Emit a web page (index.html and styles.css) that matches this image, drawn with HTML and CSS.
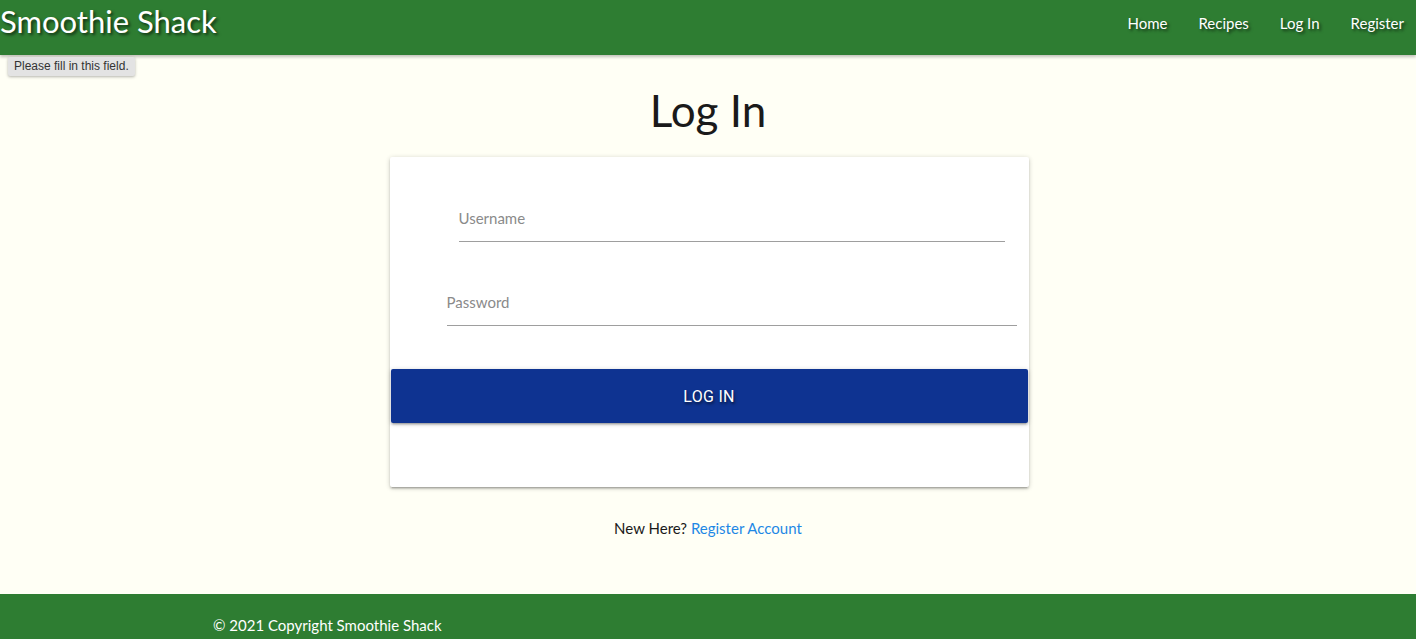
FILE: index.html
```html
<!DOCTYPE html>
<html lang="en">
<head>
<meta charset="utf-8">
<title>Log In - Smoothie Shack</title>
<link rel="stylesheet" href="styles.css">
</head>
<body>
<header class="navbar">
  <a class="brand" href="#">Smoothie Shack</a>
  <nav class="nav-links">
    <a href="#">Home</a>
    <a href="#">Recipes</a>
    <a href="#">Log In</a>
    <a href="#">Register</a>
  </nav>
</header>
<div class="tooltip">Please fill in this field.</div>
<main class="main">
  <h1 class="title">Log In</h1>
  <form class="card">
    <div class="field field-user">
      <input type="text" placeholder="Username">
    </div>
    <div class="field field-pass">
      <input type="password" placeholder="Password">
    </div>
    <button type="button" class="btn">LOG IN</button>
  </form>
  <p class="register">New Here? <a href="#">Register Account</a></p>
</main>
<footer class="footer">
  <p class="copy">© 2021 Copyright Smoothie Shack</p>
</footer>
</body>
</html>
```

FILE: styles.css
```css
* { box-sizing: border-box; }
html, body { margin: 0; padding: 0; }
body {
  font-family: Lato, "Open Sans", sans-serif;
  background: #fffff5;
  color: #1a1a1a;
  min-height: 639px;
  display: flex;
  flex-direction: column;
  overflow: hidden;
}
.navbar {
  height: 55px;
  background: #2e7d32;
  display: flex;
  align-items: center;
  justify-content: space-between;
  box-shadow: 0 2px 3px rgba(0,0,0,0.25);
  position: relative;
  z-index: 1;
}
.brand {
  color: #fff;
  text-decoration: none;
  font-size: 31px;
  line-height: 55px;
  margin-top: -12px;
  text-shadow: 2px 2px 3px rgba(0,0,0,0.6);
}
.nav-links {
  display: flex;
  margin-top: -9px;
}
.nav-links a {
  color: #fff;
  text-decoration: none;
  font-size: 15px;
  padding: 0 15.5px;
  text-shadow: 2px 2px 3px rgba(0,0,0,0.6);
}
.nav-links a:last-child { padding-right: 12px; }
.tooltip {
  position: absolute;
  left: 8px;
  top: 57px;
  height: 19px;
  padding: 0 6px;
  background: #e3e3e3;
  color: #333;
  font-family: "Liberation Sans", Arial, sans-serif;
  font-size: 12px;
  line-height: 19px;
  border-radius: 2px;
  box-shadow: 0 1px 3px rgba(0,0,0,0.3);
  z-index: 2;
}
.main {
  flex: 1;
  display: flex;
  flex-direction: column;
  align-items: center;
}
.title {
  font-weight: 400;
  font-size: 44px;
  margin: 27px 0 0;
  line-height: 56px;
}
.card {
  margin: 19px 0 0 2px;
  width: 639px;
  height: 330px;
  background: #fff;
  border-radius: 2px;
  box-shadow: 0 2px 2px rgba(0,0,0,0.14), 0 3px 1px -2px rgba(0,0,0,0.12), 0 1px 5px rgba(0,0,0,0.2);
  display: flex;
  flex-direction: column;
  padding-top: 37px;
}
.field input {
  width: 100%;
  height: 48px;
  border: none;
  border-bottom: 1px solid #9e9e9e;
  background: transparent;
  font-family: Lato, sans-serif;
  font-size: 15px;
  padding: 0;
  outline: none;
}
.field input::placeholder { color: #8a8a8a; }
.field-user { margin: 0 24px 0 69px; }
.field-pass { margin: 36px 12px 0 57px; }
.btn {
  margin: 43px 1px 0;
  height: 54px;
  background: #0e3391;
  color: #fff;
  border: none;
  border-radius: 2px;
  font-family: Roboto, sans-serif;
  font-size: 16px;
  letter-spacing: 0.3px;
  padding-top: 2px;
  text-shadow: 1px 2px 3px rgba(0,0,0,0.6);
  box-shadow: 0 2px 2px rgba(0,0,0,0.14), 0 3px 1px -2px rgba(0,0,0,0.12), 0 1px 5px rgba(0,0,0,0.2);
}
.register {
  margin: 31px 0 0;
  font-size: 15px;
  line-height: 20px;
}
.register a { color: #1e88e5; text-decoration: none; }
.footer {
  height: 45px;
  background: #2e7d32;
  margin-top: auto;
}
.copy {
  margin: 0;
  padding: 22px 0 0 213px;
  color: #fff;
  font-size: 15px;
  line-height: 18px;
}
```
